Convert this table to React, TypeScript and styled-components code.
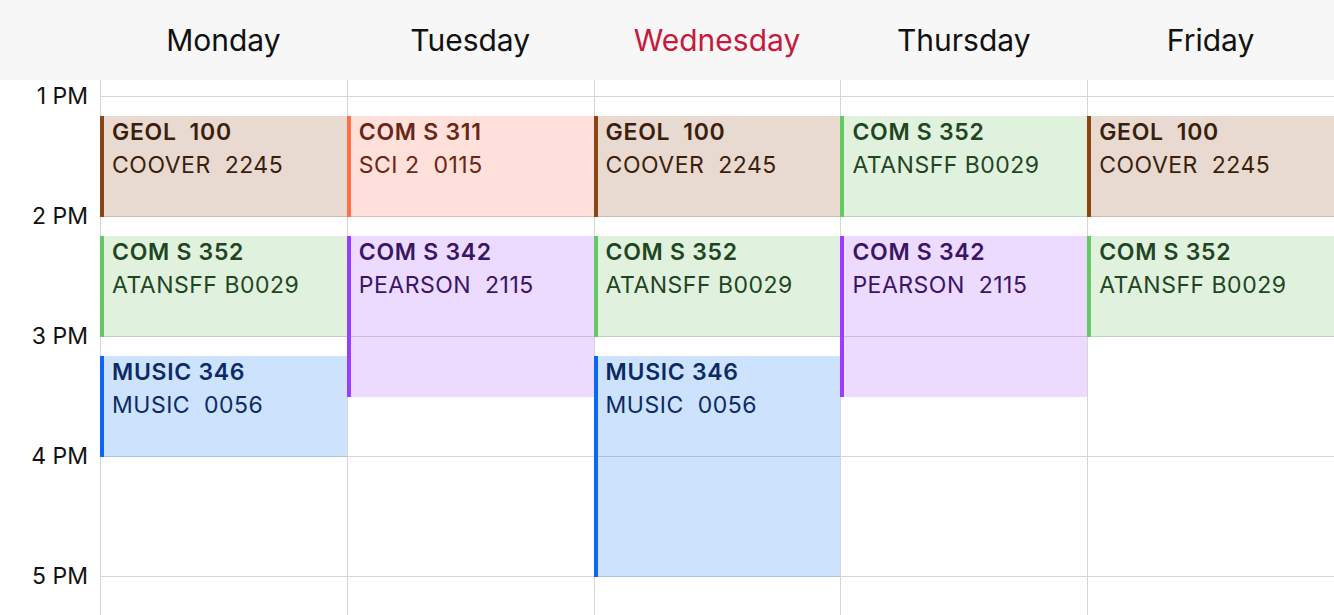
import styled, { createGlobalStyle } from 'styled-components';

const GlobalStyle = createGlobalStyle`
    html, body {
        margin: 0;
        padding: 0;
        background: #ffffff;
        font-family: Inter, "Noto Sans", "Liberation Sans", sans-serif;
        overflow: hidden;
    }
`;

const HOUR_HEIGHT = 120;
const TOP_OFFSET = 16;
const FIRST_HOUR = 13;

type Tone = 'brown' | 'coral' | 'green' | 'purple' | 'blue';

const tones: Record<Tone, { bg: string; bar: string; text: string }> = {
    brown: { bg: 'rgba(158, 100, 62, 0.24)', bar: '#8b4513', text: '#3b1f0c' },
    coral: { bg: 'rgba(255, 99, 71, 0.2)', bar: '#ff7043', text: '#6a2616' },
    green: { bg: 'rgba(100, 190, 90, 0.2)', bar: '#66c766', text: '#1f4522' },
    purple: { bg: 'rgba(160, 70, 255, 0.2)', bar: '#9b3cff', text: '#3a1563' },
    blue: { bg: 'rgba(0, 110, 245, 0.2)', bar: '#0a66f5', text: '#0c2b63' },
};

interface CalEvent {
    title: string;
    place: string;
    start: number;
    end: number;
    tone: Tone;
}

const at = (h: number, m: number) => h + m / 60;

const geol: CalEvent = { title: 'GEOL  100', place: 'COOVER  2245', start: at(13, 10), end: 14, tone: 'brown' };
const com352 = (start: number): CalEvent => ({ title: 'COM S 352', place: 'ATANSFF B0029', start, end: start + 50 / 60, tone: 'green' });
const com311: CalEvent = { title: 'COM S 311', place: 'SCI 2  0115', start: at(13, 10), end: 14, tone: 'coral' };
const com342: CalEvent = { title: 'COM S 342', place: 'PEARSON  2115', start: at(14, 10), end: 15.5, tone: 'purple' };
const music = (end: number): CalEvent => ({ title: 'MUSIC 346', place: 'MUSIC  0056', start: at(15, 10), end, tone: 'blue' });

const days: { name: string; today?: boolean; events: CalEvent[] }[] = [
    { name: 'Monday', events: [geol, com352(at(14, 10)), music(16)] },
    { name: 'Tuesday', events: [com311, com342] },
    { name: 'Wednesday', today: true, events: [geol, com352(at(14, 10)), music(17)] },
    { name: 'Thursday', events: [com352(at(13, 10)), com342] },
    { name: 'Friday', events: [geol, com352(at(14, 10))] },
];

const hours = ['1 PM', '2 PM', '3 PM', '4 PM', '5 PM'];

export default function App() {
    return (
        <Page>
            <GlobalStyle />
            <Header>
                <span />
                {days.map((d) => (
                    <DayName key={d.name} $today={!!d.today}>
                        {d.name}
                    </DayName>
                ))}
            </Header>
            <Body>
                <TimeColumn>
                    {hours.map((h) => (
                        <TimeLabel key={h}>{h}</TimeLabel>
                    ))}
                </TimeColumn>
                {days.map((d) => (
                    <DayColumn key={d.name}>
                        {d.events.map((e) => (
                            <Event
                                key={e.title}
                                $tone={e.tone}
                                style={{
                                    top: TOP_OFFSET + (e.start - FIRST_HOUR) * HOUR_HEIGHT,
                                    height: (e.end - e.start) * HOUR_HEIGHT + 1,
                                }}
                            >
                                <Title>{e.title}</Title>
                                <Place>{e.place}</Place>
                            </Event>
                        ))}
                    </DayColumn>
                ))}
            </Body>
        </Page>
    );
}

const Page = styled.div`
    width: 1334px;
    height: 615px;
    display: flex;
    flex-direction: column;
`;

const Header = styled.div`
    height: 80px;
    flex-shrink: 0;
    display: grid;
    grid-template-columns: 100px repeat(5, 1fr);
    align-items: center;
    background: #f7f7f7;
`;

const DayName = styled.div<{ $today: boolean }>`
    text-align: center;
    font-size: 30px;
    font-weight: 400;
    color: ${(p) => (p.$today ? '#c8193c' : '#111111')};
`;

const Body = styled.div`
    flex: 1;
    min-height: 0;
    display: grid;
    grid-template-columns: 100px repeat(5, 1fr);
    overflow: hidden;
`;

const TimeColumn = styled.div`
    display: flex;
    flex-direction: column;
    margin-top: ${TOP_OFFSET - HOUR_HEIGHT / 2}px;
`;

const TimeLabel = styled.div`
    height: ${HOUR_HEIGHT}px;
    flex-shrink: 0;
    display: flex;
    align-items: center;
    justify-content: flex-end;
    padding-right: 12px;
    font-size: 23px;
    color: #111111;
`;

const DayColumn = styled.div`
    position: relative;
    border-left: 1px solid #d6d6d6;
    background-image: repeating-linear-gradient(
        to bottom,
        #d6d6d6 0,
        #d6d6d6 1px,
        transparent 1px,
        transparent ${HOUR_HEIGHT}px
    );
    background-position: 0 ${TOP_OFFSET}px;
`;

const Event = styled.div<{ $tone: Tone }>`
    position: absolute;
    left: -1px;
    right: 0;
    box-sizing: border-box;
    padding: 0 8px;
    background: ${(p) => tones[p.$tone].bg};
    border-left: 4px solid ${(p) => tones[p.$tone].bar};
    color: ${(p) => tones[p.$tone].text};
    white-space: pre;
    overflow: hidden;
`;

const Title = styled.div`
    font-size: 23px;
    font-weight: 600;
    line-height: 33px;
    letter-spacing: 0.7px;
`;

const Place = styled.div`
    font-size: 23px;
    font-weight: 400;
    line-height: 33px;
    letter-spacing: 0.5px;
`;
